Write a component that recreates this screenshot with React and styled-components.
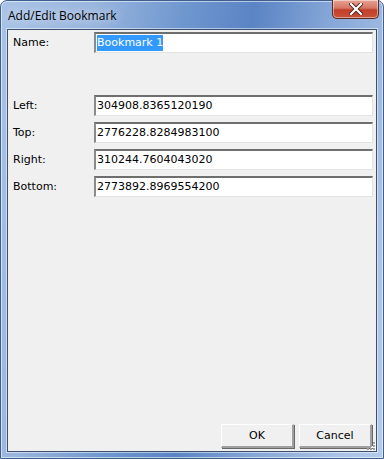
import React from "react";
import styled, { createGlobalStyle } from "styled-components";

const GlobalStyle = createGlobalStyle`
  html, body {
    margin: 0;
    padding: 0;
    background: #ffffff;
  }
`;

const Window = styled.div`
  width: 384px;
  height: 459px;
  box-sizing: border-box;
  display: flex;
  flex-direction: column;
  border: 1px solid #3d5f8e;
  border-radius: 7px 7px 0 0;
  background: linear-gradient(
    100deg,
    #a9c3e6 0%,
    #9ab6de 20%,
    #6f97cf 40%,
    #5a84c4 55%,
    #86a7d8 72%,
    #a9c2e6 90%,
    #b5cbea 100%
  );
  box-shadow: inset 0 0 0 1px rgba(255, 255, 255, 0.55);
`;

const TitleBar = styled.div`
  height: 28px;
  display: flex;
  align-items: flex-start;
  justify-content: space-between;
  padding-left: 7px;
`;

const Title = styled.span`
  margin-top: 6px;
  font-family: "Open Sans", "Noto Sans", sans-serif;
  font-size: 12px;
  color: #000;
  text-shadow: 0 0 8px rgba(255, 255, 255, 0.9);
`;

const CloseButton = styled.div`
  width: 47px;
  height: 19px;
  margin-right: 4px;
  margin-top: -1px;
  box-sizing: border-box;
  border: 1px solid #5a2a24;
  border-top: none;
  border-radius: 0 0 5px 5px;
  background: linear-gradient(#e8a493 0%, #d47664 45%, #c23f29 55%, #c8523a 100%);
  box-shadow: inset 0 0 0 1px rgba(255, 255, 255, 0.45);
  display: flex;
  align-items: center;
  justify-content: center;
`;

const Client = styled.div`
  flex: 1;
  margin: 0 6px 6px 6px;
  border: 1px solid #3c4f6e;
  background: #f0f0f0;
  display: flex;
  flex-direction: column;
  padding: 2px 3px 3px 5px;
  position: relative;
  box-shadow: 0 0 0 1px rgba(255, 255, 255, 0.5);
`;

const Form = styled.div`
  display: grid;
  grid-template-columns: 81px 1fr;
  row-gap: 6px;
`;

const Label = styled.label`
  font-family: "DejaVu Sans", Tahoma, sans-serif;
  font-size: 11px;
  color: #000;
  padding-top: 4px;
  margin-top: ${(p) => p.$gap || 0}px;
`;

const Field = styled.div`
  height: 21px;
  box-sizing: border-box;
  background: #fff;
  border-style: solid;
  border-width: 2px 1px 1px 2px;
  border-color: #6e6e6e #e3e3e3 #e3e3e3 #8a8a8a;
  font-family: "DejaVu Sans", Tahoma, sans-serif;
  font-size: 11px;
  color: #000;
  padding: 2px 0 0 1px;
  white-space: nowrap;
  overflow: hidden;
  margin-top: ${(p) => p.$gap || 0}px;
`;

const Selected = styled.span`
  background: #3399ff;
  color: #fff;
  padding: 1px 0 2px;
`;

const Spacer = styled.div`
  flex: 1;
`;

const Buttons = styled.div`
  display: flex;
  justify-content: flex-end;
  gap: 5px;
  padding-right: 1px;
`;

const Button = styled.button`
  width: 73px;
  height: 24px;
  box-sizing: border-box;
  background: #f0f0f0;
  border-style: solid;
  border-width: 1px 2px 2px 1px;
  border-color: #ffffff #a0a0a0 #a0a0a0 #ffffff;
  box-shadow: 1px 1px 0 #696969;
  font-family: "DejaVu Sans", Tahoma, sans-serif;
  font-size: 11px;
  color: #000;
  padding: 0;
`;

const Grip = styled.svg`
  position: absolute;
  right: 0;
  bottom: 0;
`;

const rows = [
  { label: "Left:", value: "304908.8365120190" },
  { label: "Top:", value: "2776228.8284983100" },
  { label: "Right:", value: "310244.7604043020" },
  { label: "Bottom:", value: "2773892.8969554200" },
];

export default function App() {
  return (
    <>
      <GlobalStyle />
      <Window>
        <TitleBar>
          <Title>Add/Edit Bookmark</Title>
          <CloseButton>
            <svg width="14" height="12" viewBox="0 0 14 12">
              <path
                d="M2 1 L12 11 M12 1 L2 11"
                stroke="#4a1f19"
                strokeWidth="4"
                strokeLinecap="square"
              />
              <path
                d="M2 1 L12 11 M12 1 L2 11"
                stroke="#ffffff"
                strokeWidth="2.2"
                strokeLinecap="square"
              />
            </svg>
          </CloseButton>
        </TitleBar>
        <Client>
          <Form>
            <Label>Name:</Label>
            <Field>
              <Selected>Bookmark 1</Selected>
            </Field>
            {rows.map((r, i) => (
              <React.Fragment key={r.label}>
                <Label $gap={i === 0 ? 36 : 0}>{r.label}</Label>
                <Field $gap={i === 0 ? 36 : 0}>{r.value}</Field>
              </React.Fragment>
            ))}
          </Form>
          <Spacer />
          <Buttons>
            <Button>OK</Button>
            <Button>Cancel</Button>
          </Buttons>
          <Grip width="12" height="12" viewBox="0 0 12 12">
            {[
              [9, 3],
              [9, 6],
              [6, 6],
              [9, 9],
              [6, 9],
              [3, 9],
            ].map(([x, y]) => (
              <React.Fragment key={`${x}-${y}`}>
                <rect x={x + 1} y={y + 1} width="2" height="2" fill="#ffffff" />
                <rect x={x} y={y} width="2" height="2" fill="#a0a0a0" />
              </React.Fragment>
            ))}
          </Grip>
        </Client>
      </Window>
    </>
  );
}
